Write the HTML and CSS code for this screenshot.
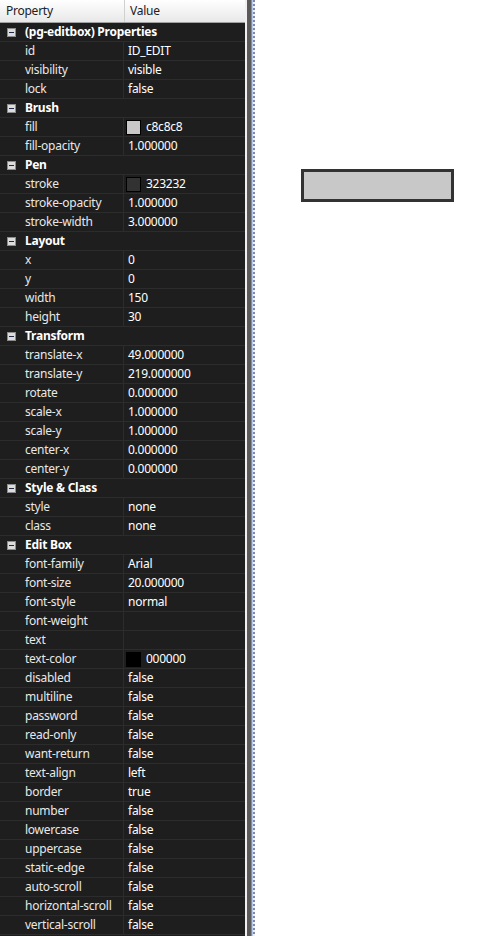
FILE: index.html
```html
<!DOCTYPE html>
<html>
<head>
<meta charset="utf-8">
<link rel="stylesheet" href="styles.css">
</head>
<body>
<div class="app">
  <div class="grid">
    <div class="head">
      <div class="hcell hname">Property</div>
      <div class="hcell hval">Value</div>
    </div>
    <div class="rows">
      <div class="cat"><span class="tog"></span><span class="ctext">(pg-editbox) Properties</span></div>
      <div class="row"><span class="n">id</span><span class="v">ID_EDIT</span></div>
      <div class="row"><span class="n">visibility</span><span class="v">visible</span></div>
      <div class="row"><span class="n">lock</span><span class="v">false</span></div>
      <div class="cat"><span class="tog"></span><span class="ctext">Brush</span></div>
      <div class="row"><span class="n">fill</span><span class="v"><span class="sw sw-fill"></span>c8c8c8</span></div>
      <div class="row"><span class="n">fill-opacity</span><span class="v">1.000000</span></div>
      <div class="cat"><span class="tog"></span><span class="ctext">Pen</span></div>
      <div class="row"><span class="n">stroke</span><span class="v"><span class="sw sw-stroke"></span>323232</span></div>
      <div class="row"><span class="n">stroke-opacity</span><span class="v">1.000000</span></div>
      <div class="row"><span class="n">stroke-width</span><span class="v">3.000000</span></div>
      <div class="cat"><span class="tog"></span><span class="ctext">Layout</span></div>
      <div class="row"><span class="n">x</span><span class="v">0</span></div>
      <div class="row"><span class="n">y</span><span class="v">0</span></div>
      <div class="row"><span class="n">width</span><span class="v">150</span></div>
      <div class="row"><span class="n">height</span><span class="v">30</span></div>
      <div class="cat"><span class="tog"></span><span class="ctext">Transform</span></div>
      <div class="row"><span class="n">translate-x</span><span class="v">49.000000</span></div>
      <div class="row"><span class="n">translate-y</span><span class="v">219.000000</span></div>
      <div class="row"><span class="n">rotate</span><span class="v">0.000000</span></div>
      <div class="row"><span class="n">scale-x</span><span class="v">1.000000</span></div>
      <div class="row"><span class="n">scale-y</span><span class="v">1.000000</span></div>
      <div class="row"><span class="n">center-x</span><span class="v">0.000000</span></div>
      <div class="row"><span class="n">center-y</span><span class="v">0.000000</span></div>
      <div class="cat"><span class="tog"></span><span class="ctext">Style &amp; Class</span></div>
      <div class="row"><span class="n">style</span><span class="v">none</span></div>
      <div class="row"><span class="n">class</span><span class="v">none</span></div>
      <div class="cat"><span class="tog"></span><span class="ctext">Edit Box</span></div>
      <div class="row"><span class="n">font-family</span><span class="v">Arial</span></div>
      <div class="row"><span class="n">font-size</span><span class="v">20.000000</span></div>
      <div class="row"><span class="n">font-style</span><span class="v">normal</span></div>
      <div class="row"><span class="n">font-weight</span><span class="v"></span></div>
      <div class="row"><span class="n">text</span><span class="v"></span></div>
      <div class="row"><span class="n">text-color</span><span class="v"><span class="sw sw-text"></span>000000</span></div>
      <div class="row"><span class="n">disabled</span><span class="v">false</span></div>
      <div class="row"><span class="n">multiline</span><span class="v">false</span></div>
      <div class="row"><span class="n">password</span><span class="v">false</span></div>
      <div class="row"><span class="n">read-only</span><span class="v">false</span></div>
      <div class="row"><span class="n">want-return</span><span class="v">false</span></div>
      <div class="row"><span class="n">text-align</span><span class="v">left</span></div>
      <div class="row"><span class="n">border</span><span class="v">true</span></div>
      <div class="row"><span class="n">number</span><span class="v">false</span></div>
      <div class="row"><span class="n">lowercase</span><span class="v">false</span></div>
      <div class="row"><span class="n">uppercase</span><span class="v">false</span></div>
      <div class="row"><span class="n">static-edge</span><span class="v">false</span></div>
      <div class="row"><span class="n">auto-scroll</span><span class="v">false</span></div>
      <div class="row"><span class="n">horizontal-scroll</span><span class="v">false</span></div>
      <div class="row"><span class="n">vertical-scroll</span><span class="v">false</span></div>
    </div>
  </div>
  <div class="splitter">
    <div class="sp sp1"></div>
    <div class="sp sp2"></div>
    <div class="sp sp3"></div>
    <div class="sp sp4"></div>
    <div class="sp sp5"></div>
  </div>
  <div class="canvas">
    <div class="editbox"></div>
  </div>
</div>
</body>
</html>
```

FILE: styles.css
```css
html, body {
  margin: 0;
  padding: 0;
  height: 100%;
  overflow: hidden;
}
body {
  font-family: "Noto Sans", "Open Sans", sans-serif;
  font-size: 12px;
  letter-spacing: -0.25px;
  background: #ffffff;
}
.app {
  display: flex;
  height: 936px;
}
.grid {
  width: 245px;
  flex: none;
  background: #1e1e1e;
  display: flex;
  flex-direction: column;
  overflow: hidden;
}
.head {
  height: 22px;
  display: flex;
  background: linear-gradient(#ffffff, #e8e8e8);
  border-bottom: 1px solid #a0a0a0;
  color: #202020;
}
.hcell {
  line-height: 22px;
  box-sizing: border-box;
}
.hname {
  width: 125px;
  padding-left: 6px;
  border-right: 1px solid #d0d0d0;
}
.hval {
  padding-left: 5px;
}
.rows {
  display: flex;
  flex-direction: column;
}
.cat, .row {
  height: 18px;
  border-bottom: 1px solid #2c2c2c;
  display: flex;
  align-items: center;
  line-height: 18px;
  white-space: nowrap;
}
.cat {
  color: #ffffff;
  font-weight: bold;
}
.tog {
  width: 9px;
  height: 9px;
  box-sizing: border-box;
  margin-left: 7px;
  margin-right: 9px;
  border: 1px solid #8c8c8c;
  background: #dcdcdc;
  position: relative;
}
.tog::after {
  content: "";
  position: absolute;
  left: 1px;
  right: 1px;
  top: 3px;
  height: 1px;
  background: #1a2a4a;
}
.n {
  width: 124px;
  box-sizing: border-box;
  padding-left: 25px;
  color: #e8e8e8;
  border-right: 1px solid #2c2c2c;
  height: 18px;
}
.v {
  padding-left: 4px;
  color: #ffffff;
  display: flex;
  align-items: center;
  height: 18px;
}
.sw {
  width: 15px;
  height: 15px;
  box-sizing: border-box;
  border: 1px solid #000000;
  margin-left: -2px;
  margin-right: 5px;
}
.sw-fill { background: #c8c8c8; }
.sw-stroke { background: #323232; }
.sw-text { background: #000000; }
.splitter {
  display: flex;
  flex: none;
}
.sp { height: 100%; }
.sp1 { width: 2px; background: #f0f0f0; }
.sp2 { width: 4px; background: #5a5a5a; }
.sp3 { width: 1px; background: #8c8c8c; }
.sp4 { width: 1px; background: #b8c8e8; }
.sp5 {
  width: 2px;
  background: repeating-linear-gradient(#7e86a6 0 2px, #eef0f6 2px 4px);
}
.canvas {
  flex: 1;
  position: relative;
  background: #ffffff;
}
.editbox {
  position: absolute;
  left: 46px;
  top: 169px;
  width: 153px;
  height: 33px;
  box-sizing: border-box;
  background: #c8c8c8;
  border: 3px solid #323232;
}
```
